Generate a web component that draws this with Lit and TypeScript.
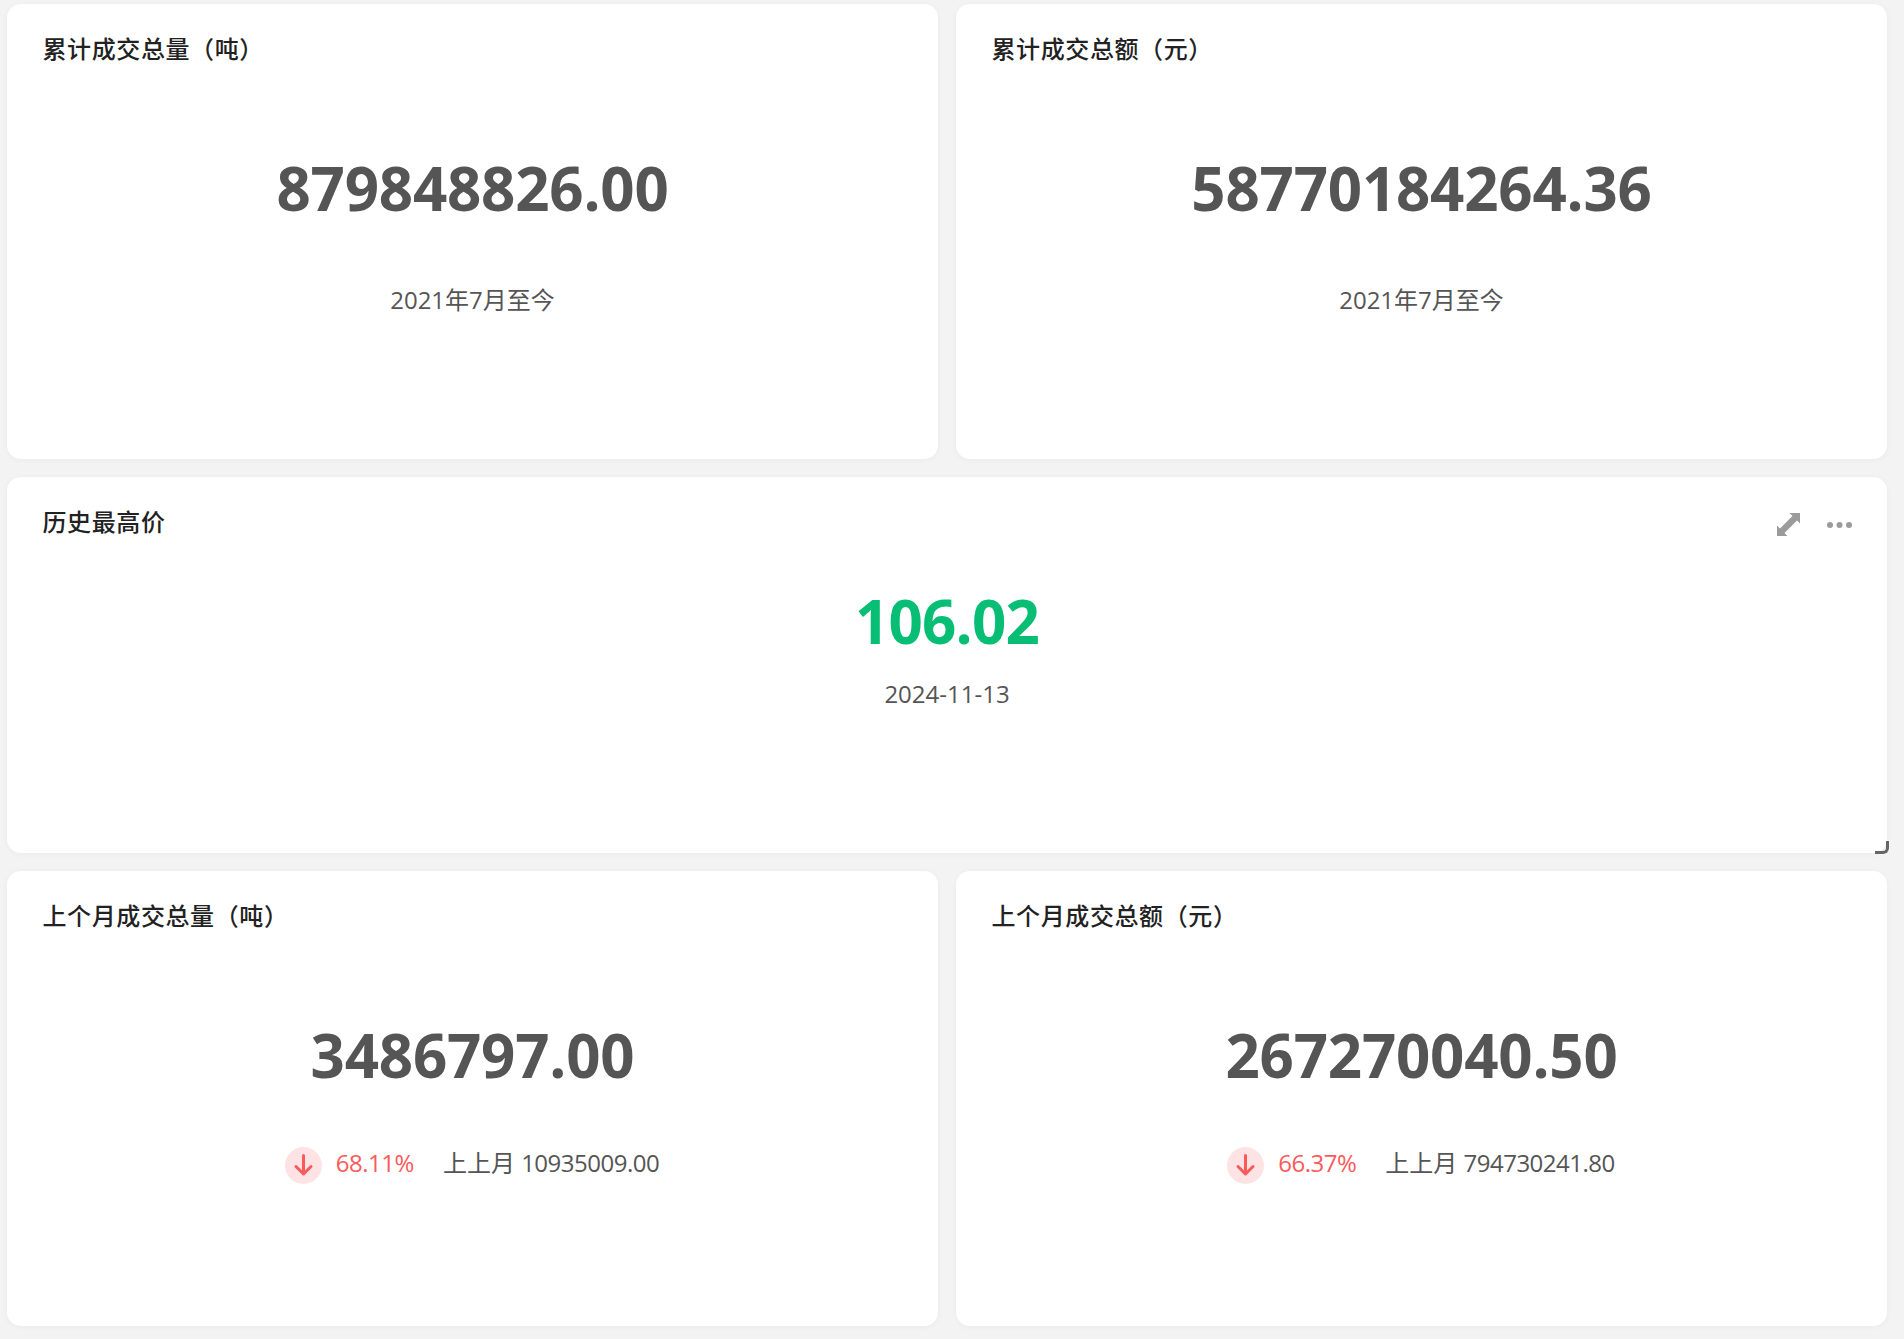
import { LitElement, html, css, svg } from "lit";
import { customElement } from "lit/decorators.js";

const arrow = svg`<svg class="arrow" viewBox="0 0 37 37" width="37" height="37"><circle cx="18.5" cy="18.5" r="18.5" fill="#fde3e3"/><path d="M18.5 8.5V27M11 19.5L18.5 27L26 19.5" fill="none" stroke="#fb5a5a" stroke-width="3" stroke-linecap="round" stroke-linejoin="round"/></svg>`;

@customElement("app-root")
export class AppRoot extends LitElement {
  static styles = css`
    :host {
      display: block;
      height: 1339px;
      background: #f3f3f3;
      font-family: "Open Sans", "Noto Sans CJK SC", sans-serif;
      color: #555;
      overflow: hidden;
    }
    .grid {
      display: grid;
      grid-template-columns: 931px 931px;
      grid-template-rows: 455px 376px 455px;
      gap: 18px;
      padding: 4px 0 0 7px;
    }
    .card {
      position: relative;
      background: #fff;
      border-radius: 14px;
      box-shadow: 0 1px 6px rgba(0, 0, 0, 0.04);
      padding: 27px 35.5px 0;
      box-sizing: border-box;
      display: flex;
      flex-direction: column;
    }
    .wide { grid-column: 1 / 3; }
    .title {
      font-size: 24px;
      line-height: 36px;
      height: 36px;
      color: #222;
      font-weight: 500;
      letter-spacing: 0.6px;
    }
    .value {
      font-size: 60px;
      line-height: 80px;
      font-weight: 700;
      letter-spacing: -0.2px;
      text-align: center;
      margin-top: 81px;
    }
    .sub {
      font-size: 24px;
      line-height: 36px;
      text-align: center;
      margin-top: 54px;
    }
    .hi { color: #07be74; margin-top: 41px; letter-spacing: -0.8px; }
    .wide .sub { margin-top: 15px; }
    .trend {
      display: flex;
      justify-content: center;
      align-items: center;
      font-size: 24px;
      line-height: 36px;
      margin-top: 47px;
      padding-right: 1px;
    }
    .arrow { margin-right: 14px; margin-top: 5px; }
    .pct { color: #fb5a5a; margin-right: 29px; letter-spacing: -0.5px; }
    .num { letter-spacing: -0.5px; }
    .tools {
      position: absolute;
      top: 36px;
      right: 35px;
      display: flex;
      align-items: center;
      gap: 27px;
    }
    .corner {
      position: absolute;
      right: -2px;
      bottom: -1px;
      width: 14px;
      height: 13px;
      border-right: 3px solid #666;
      border-bottom: 3px solid #666;
      border-bottom-right-radius: 6px;
      box-sizing: border-box;
    }
  `;

  private stat(title: string, value: string, sub: unknown) {
    return html`<section class="card">
      <div class="title">${title}</div>
      <div class="value">${value}</div>
      ${sub}
    </section>`;
  }

  private trend(pct: string, prev: string) {
    return html`<div class="trend">
      ${arrow}<span class="pct">${pct}</span><span>上上月 <span class="num">${prev}</span></span>
    </div>`;
  }

  render() {
    const since = html`<div class="sub">2021年7月至今</div>`;
    return html`<div class="grid">
      ${this.stat("累计成交总量（吨）", "879848826.00", since)}
      ${this.stat("累计成交总额（元）", "58770184264.36", since)}
      <section class="card wide">
        <div class="title">历史最高价</div>
        <div class="tools">
          <svg width="23" height="23" viewBox="0 0 23 23" fill="#9b9b9b">
            <path d="M12.5 0H23V10.5L20 7.5L7.5 20L10.5 23H0V12.5L3 15.5L15.5 3Z" />
          </svg>
          <svg width="25" height="6" viewBox="0 0 25 6" fill="#9b9b9b">
            <circle cx="3" cy="3" r="3" /><circle cx="12.5" cy="3" r="3" /><circle cx="22" cy="3" r="3" />
          </svg>
        </div>
        <div class="value hi">106.02</div>
        <div class="sub">2024-11-13</div>
        <div class="corner"></div>
      </section>
      ${this.stat("上个月成交总量（吨）", "3486797.00", this.trend("68.11%", "10935009.00"))}
      ${this.stat("上个月成交总额（元）", "267270040.50", this.trend("66.37%", "794730241.80"))}
    </div>`;
  }
}
